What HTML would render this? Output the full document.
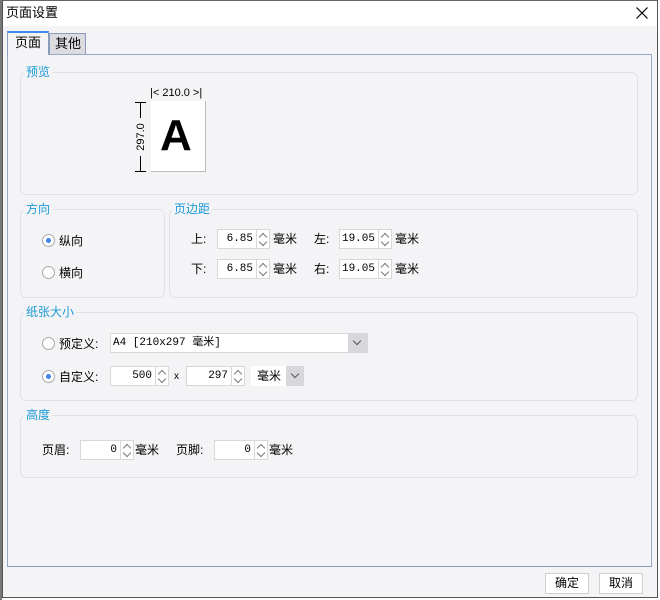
<!DOCTYPE html>
<html><head><meta charset="utf-8"><style>
*{box-sizing:border-box;margin:0;padding:0}
body{width:660px;height:600px;background:#fff;position:relative;overflow:hidden;font-family:"Liberation Sans","Noto Sans CJK SC",sans-serif;font-size:12px;color:#000}
.a{position:absolute}
.grp{position:absolute;border:1px solid #e2e2e6;border-radius:6px}
.gt{position:absolute;color:#1a9ad6;font-size:12px;background:#f4f4f6;padding:0 2px;line-height:14px}
.inp{position:absolute;background:#fff;border:1px solid #d8d8d8;height:20px;font-family:"Liberation Mono","Noto Sans CJK SC",monospace;font-size:11px;line-height:18px;text-align:right;padding-right:3px}
.spin{position:absolute;width:13px;height:20px;border:1px solid #d8d8d8;border-left:none;background:#fff}
.spin:before{content:"";position:absolute;left:3px;top:4px;width:5px;height:5px;border-left:1px solid #777;border-top:1px solid #777;transform:rotate(45deg)}
.spin:after{content:"";position:absolute;left:3px;top:9px;width:5px;height:5px;border-right:1px solid #777;border-bottom:1px solid #777;transform:rotate(45deg)}
.radio{position:absolute;width:13px;height:13px;border:1px solid #a9a9a9;border-radius:50%;background:#fff}
.radio.on:after{content:"";position:absolute;left:3px;top:3px;width:5px;height:5px;border-radius:50%;background:#3a87e8}
.lbl{position:absolute;line-height:14px}
.btn{position:absolute;border:1px solid #d0d0d0;background:#fff;text-align:center;line-height:19px;height:21px}
.dd{position:absolute;width:18px;height:20px;background:#d8d8dc}
.dd:after{content:"";position:absolute;left:6px;top:5px;width:5px;height:5px;border-right:1px solid #555;border-bottom:1px solid #555;transform:rotate(45deg)}
</style></head><body>
<div class="a" style="left:0;top:0;width:2px;height:600px;background:#777"></div>
<div class="a" style="left:2px;top:0;width:656px;height:598px;background:#f4f4f6;border:1px solid #555;border-top:1px solid #666"></div>
<div class="a" style="left:3px;top:1px;width:654px;height:25px;background:#fff"></div>
<div class="lbl" style="left:6px;top:6px;font-size:13px">页面设置</div>
<svg class="a" style="left:636px;top:7px" width="12" height="12"><path d="M0.5 0.5L11.5 11.5M11.5 0.5L0.5 11.5" stroke="#000" stroke-width="1.2"/></svg>
<div class="a" style="left:7px;top:54px;width:645px;height:513px;border:1px solid #98a8c4;border-bottom-color:#8a9cbc"></div>
<div class="a" style="left:7px;top:31px;width:42px;height:24px;background:#f4f4f6;border:1px solid #8a9cbc;border-bottom:none;border-top:2px solid #3c8ee8"></div>
<div class="lbl" style="left:15px;top:36px;font-size:13px">页面</div>
<div class="a" style="left:49px;top:33px;width:37px;height:21px;background:#dcdce0;border:1px solid #8a9cbc;border-bottom:none"></div>
<div class="lbl" style="left:55px;top:37px;font-size:13px">其他</div>
<div class="grp" style="left:20px;top:72px;width:618px;height:123px"></div>
<div class="gt" style="left:24px;top:65px">预览</div>
<div class="lbl" style="left:150px;top:86px;font-size:11px">|&lt; 210.0 &gt;|</div>
<div class="a" style="left:151px;top:101px;width:55px;height:71px;background:#fff;border-right:1px solid #bbb;border-bottom:1px solid #bbb"></div>
<div class="a" style="left:160px;top:111px;font-size:44px;font-weight:bold;line-height:50px">A</div>
<div class="a" style="left:135px;top:102px;width:11px;height:1px;background:#000"></div>
<div class="a" style="left:135px;top:171px;width:11px;height:1px;background:#000"></div>
<div class="a" style="left:140px;top:103px;width:1px;height:15px;background:#000"></div>
<div class="a" style="left:140px;top:156px;width:1px;height:15px;background:#000"></div>
<div class="a" style="left:121px;top:131px;transform:rotate(-90deg);font-size:11px;width:40px;text-align:center">297.0</div>
<div class="grp" style="left:20px;top:209px;width:145px;height:89px"></div>
<div class="gt" style="left:24px;top:202px">方向</div>
<div class="radio on" style="left:42px;top:234px"></div><div class="lbl" style="left:59px;top:234px">纵向</div>
<div class="radio" style="left:42px;top:266px"></div><div class="lbl" style="left:59px;top:266px">横向</div>
<div class="grp" style="left:169px;top:209px;width:469px;height:89px"></div>
<div class="gt" style="left:172px;top:202px">页边距</div>
<div class="lbl" style="left:191px;top:232px">上:</div>
<div class="inp" style="left:217px;top:229px;width:40px">6.85</div><div class="spin" style="left:257px;top:229px"></div><div class="lbl" style="left:273px;top:232px">毫米</div>
<div class="lbl" style="left:314px;top:232px">左:</div>
<div class="inp" style="left:339px;top:229px;width:40px">19.05</div><div class="spin" style="left:379px;top:229px"></div><div class="lbl" style="left:395px;top:232px">毫米</div>
<div class="lbl" style="left:191px;top:262px">下:</div>
<div class="inp" style="left:217px;top:259px;width:40px">6.85</div><div class="spin" style="left:257px;top:259px"></div><div class="lbl" style="left:273px;top:262px">毫米</div>
<div class="lbl" style="left:314px;top:262px">右:</div>
<div class="inp" style="left:339px;top:259px;width:40px">19.05</div><div class="spin" style="left:379px;top:259px"></div><div class="lbl" style="left:395px;top:262px">毫米</div>
<div class="grp" style="left:20px;top:312px;width:618px;height:89px"></div>
<div class="gt" style="left:24px;top:305px">纸张大小</div>
<div class="radio" style="left:42px;top:337px"></div><div class="lbl" style="left:59px;top:337px">预定义:</div>
<div class="inp" style="left:110px;top:333px;width:240px;text-align:left;padding-left:2px">A4 [210x297 毫米]</div><div class="dd" style="left:348px;top:333px;width:20px"></div>
<div class="radio on" style="left:42px;top:370px"></div><div class="lbl" style="left:59px;top:370px">自定义:</div>
<div class="inp" style="left:110px;top:366px;width:46px">500</div><div class="spin" style="left:156px;top:366px"></div>
<div class="lbl" style="left:174px;top:370px;font-size:10px">x</div>
<div class="inp" style="left:186px;top:366px;width:46px">297</div><div class="spin" style="left:232px;top:366px"></div>
<div class="a" style="left:251px;top:366px;width:35px;height:20px;background:#fff"></div><div class="lbl" style="left:257px;top:369px">毫米</div><div class="dd" style="left:286px;top:366px"></div>
<div class="grp" style="left:20px;top:415px;width:618px;height:63px"></div>
<div class="gt" style="left:24px;top:408px">高度</div>
<div class="lbl" style="left:42px;top:443px">页眉:</div>
<div class="inp" style="left:80px;top:440px;width:41px">0</div><div class="spin" style="left:121px;top:440px"></div><div class="lbl" style="left:135px;top:443px">毫米</div>
<div class="lbl" style="left:176px;top:443px">页脚:</div>
<div class="inp" style="left:214px;top:440px;width:41px">0</div><div class="spin" style="left:255px;top:440px"></div><div class="lbl" style="left:269px;top:443px">毫米</div>
<div class="btn" style="left:545px;top:573px;width:44px">确定</div>
<div class="btn" style="left:599px;top:573px;width:44px">取消</div>
</body></html>
